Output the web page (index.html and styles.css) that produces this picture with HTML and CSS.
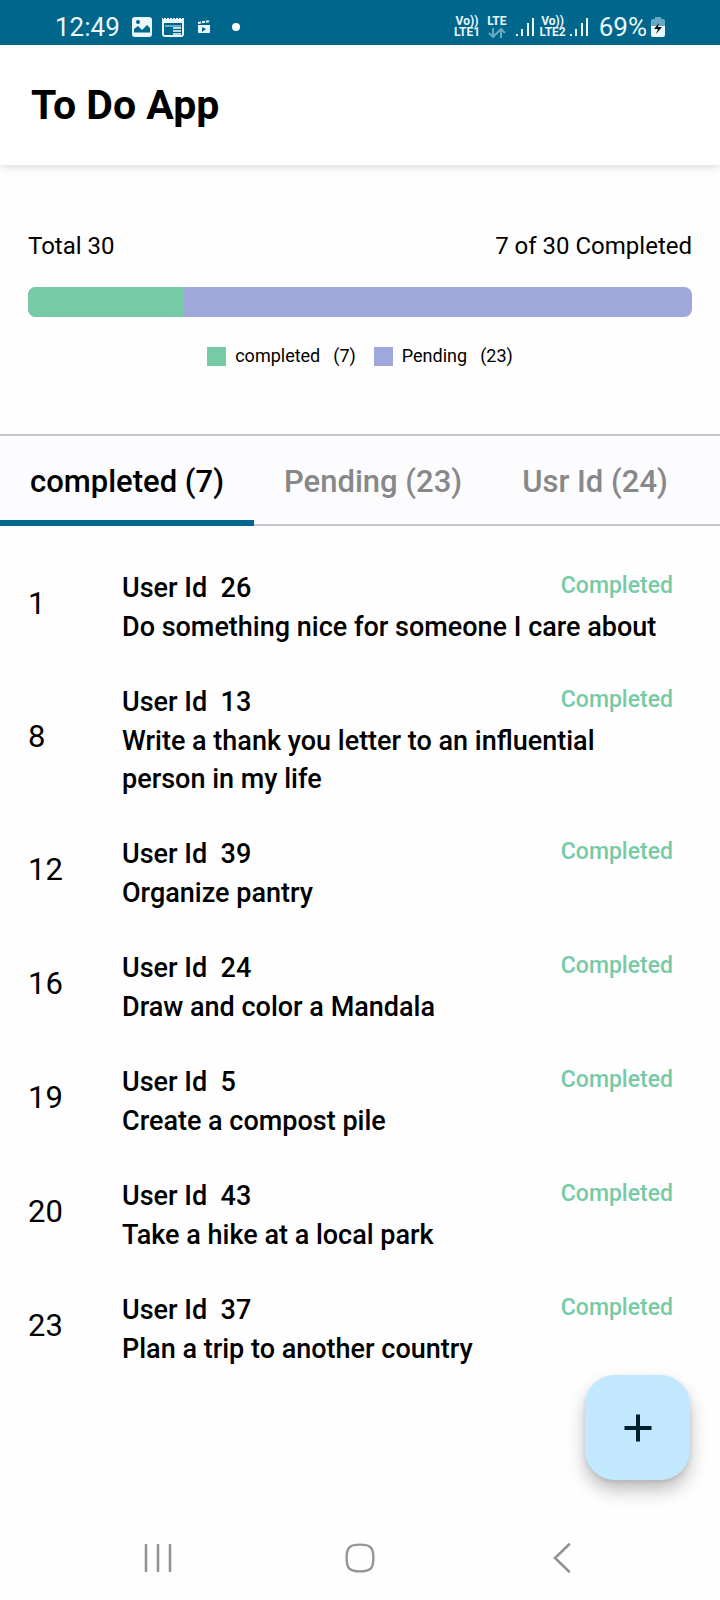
FILE: index.html
```html
<!DOCTYPE html>
<html lang="en">
<head>
<meta charset="utf-8">
<meta name="viewport" content="width=device-width, initial-scale=1">
<title>To Do App</title>
<link rel="stylesheet" href="styles.css">
</head>
<body>
<div class="status">
  <div class="status-group">
    <span class="clock">12:49</span>
    <svg width="22" height="22" viewBox="0 0 22 22"><rect x="1" y="1" width="20" height="20" rx="3" fill="#e9f6fc"/><path d="M3 17v-4l4-3 4 4 5-5 3 3v5z" fill="#00668b"/><circle cx="7" cy="6" r="2" fill="#00668b"/><path d="M2 18h18" stroke="#e9f6fc" stroke-width="3"/></svg>
    <svg width="22" height="22" viewBox="0 0 22 22"><path d="M0 2h22v16a3 3 0 0 1-3 3H3a3 3 0 0 1-3-3z" fill="#e9f6fc"/><path d="M1 2h20" stroke="#00668b" stroke-width="2" stroke-dasharray="1 2"/><path d="M2 7h18v12H2z" fill="#00668b"/><path d="M3 10h16" stroke="#6aa9c2" stroke-width="2"/><path d="M11 12h8M11 15h8M11 18h8" stroke="#b9dce9" stroke-width="2"/></svg>
    <svg class="ic-clip" width="14" height="14" viewBox="0 0 14 14"><path d="M1 5h12v7a1 1 0 0 1-1 1H2a1 1 0 0 1-1-1z" fill="#e9f6fc"/><path d="M1 3l12-2" stroke="#e9f6fc" stroke-width="2" stroke-dasharray="3 1"/><path d="M5 7l4 2-4 3z" fill="#00668b"/></svg>
    <span class="dot"></span>
  </div>
  <div class="status-group status-right">
    <span class="sim"><span>Vo))</span><span>LTE1</span></span>
    <span class="sim network"><span>LTE</span><svg width="18" height="10" viewBox="0 0 18 10" fill="none" stroke="#6aa9c2" stroke-width="2"><path d="M5 0v9M1 5l4 4 4-4M13 10V1M9 5l4-4 4 4"/></svg></span>
    <svg class="signal" width="19" height="20" viewBox="0 0 19 20" fill="#e9f6fc"><path d="M0 17h2v2H0zM5 12h2v7H5zM11 6h2v13h-2zM16 1h2v18h-2z"/></svg>
    <span class="sim"><span>Vo))</span><span>LTE2</span></span>
    <svg class="signal" width="19" height="20" viewBox="0 0 19 20" fill="#e9f6fc"><path d="M0 17h2v2H0zM5 12h2v7H5zM11 6h2v13h-2zM16 1h2v18h-2z"/></svg>
    <span class="percent">69%</span>
    <svg width="14" height="20" viewBox="0 0 14 20"><path d="M4 0h6v2h2a2 2 0 0 1 2 2v6H0V4a2 2 0 0 1 2-2h2z" fill="#6aa9c2"/><path d="M0 9h14v9a2 2 0 0 1-2 2H2a2 2 0 0 1-2-2z" fill="#e9f6fc"/><path d="M8 6l-5 6h4l-2 5 6-7H7z" fill="#111"/></svg>
  </div>
</div>
<header class="appbar"><h1>To Do App</h1></header>
<main>
  <section class="summary">
    <div class="totals"><span>Total 30</span><span>7 of 30 Completed</span></div>
    <div class="bar"><div class="bar-done" style="width:23.33%"></div></div>
    <div class="legend">
      <span class="key"><i class="swatch done"></i>completed <span class="count">(7)</span></span>
      <span class="key"><i class="swatch pending"></i>Pending <span class="count">(23)</span></span>
    </div>
  </section>
  <nav class="tabs">
    <button class="tab active">completed (7)</button>
    <button class="tab">Pending (23)</button>
    <button class="tab">Usr Id (24)</button>
  </nav>
  <ul class="todos">
    <li><span class="num">1</span><div class="body"><div class="top"><span class="user">User Id&nbsp; 26</span><span class="state">Completed</span></div><p>Do something nice for someone I care about</p></div></li>
    <li><span class="num">8</span><div class="body"><div class="top"><span class="user">User Id&nbsp; 13</span><span class="state">Completed</span></div><p>Write a thank you letter to an influential person in my life</p></div></li>
    <li><span class="num">12</span><div class="body"><div class="top"><span class="user">User Id&nbsp; 39</span><span class="state">Completed</span></div><p>Organize pantry</p></div></li>
    <li><span class="num">16</span><div class="body"><div class="top"><span class="user">User Id&nbsp; 24</span><span class="state">Completed</span></div><p>Draw and color a Mandala</p></div></li>
    <li><span class="num">19</span><div class="body"><div class="top"><span class="user">User Id&nbsp; 5</span><span class="state">Completed</span></div><p>Create a compost pile</p></div></li>
    <li><span class="num">20</span><div class="body"><div class="top"><span class="user">User Id&nbsp; 43</span><span class="state">Completed</span></div><p>Take a hike at a local park</p></div></li>
    <li><span class="num">23</span><div class="body"><div class="top"><span class="user">User Id&nbsp; 37</span><span class="state">Completed</span></div><p>Plan a trip to another country</p></div></li>
  </ul>
</main>
<button class="fab" aria-label="Add task"><svg width="28" height="28" viewBox="0 0 28 28"><path d="M14 0.5v27M0.5 14h27" stroke="#001e2c" stroke-width="4"/></svg></button>
<footer class="sysnav">
  <button aria-label="Recent apps"><svg width="30" height="30" viewBox="0 0 30 30" stroke="#949494" stroke-width="2.6" stroke-linecap="round"><path d="M3 2v26M15 2v26M27 2v26"/></svg></button>
  <button aria-label="Home"><svg width="30" height="30" viewBox="0 0 30 30" fill="none" stroke="#949494" stroke-width="2.4"><path d="M15 1.600C25.500 1.600 28.400 4.500 28.400 15S25.500 28.400 15 28.400 1.600 25.500 1.600 15 4.500 1.600 15 1.600z"/></svg></button>
  <button aria-label="Back"><svg width="30" height="30" viewBox="0 0 30 30" fill="none" stroke="#949494" stroke-width="2.6" stroke-linecap="round"><path d="M22 1.500L8 15l14 13.500"/></svg></button>
</footer>
</body>
</html>
```
FILE: styles.css
```css
* { box-sizing: border-box; }
body {
  margin: 0;
  min-height: 100vh;
  display: flex;
  flex-direction: column;
  background: #fefefe;
  color: #000;
  font-family: Roboto, "Liberation Sans", sans-serif;
}
button { border: 0; background: none; padding: 0; font: inherit; color: inherit; }
svg { display: block; flex: none; }
h1, p, ul { margin: 0; padding: 0; }

.status {
  height: 45px;
  padding: 8px 55px 0 55px;
  display: flex;
  justify-content: space-between;
  background: #00668b;
  color: #e9f6fc;
}
.status-group { display: flex; align-items: center; gap: 9px; }
.clock, .percent { font-size: 26px; line-height: 36px; }
.clock { margin-right: 2px; }
.ic-clip { margin: 0 12px 0 4px; }
.dot { width: 8px; height: 8px; border-radius: 50%; background: #fff; }
.status-right { gap: 4px; }
.sim { display: flex; flex-direction: column; align-items: center; font-size: 12px; line-height: 11px; font-weight: 700; }
.network { margin: 0 6px 0 3px; }
.sim svg { margin-top: 1px; }
.percent { margin-left: 6px; }

.appbar {
  padding: 36px 31px;
  background: #fff;
  box-shadow: 0 2px 8px rgba(0, 0, 0, .15);
}
.appbar h1 { font-size: 41px; line-height: 48px; font-weight: 700; }

.summary { padding: 64px 28px 65px; }
.totals { display: flex; justify-content: space-between; font-size: 24px; line-height: 34px; }
.bar { height: 30px; margin-top: 24px; border-radius: 8px; overflow: hidden; background: #9fa8da; }
.bar-done { height: 100%; background: #76caa6; }
.legend { display: flex; justify-content: center; gap: 18px; margin-top: 26px; font-size: 18px; line-height: 26px; }
.key { display: flex; align-items: center; }
.swatch { width: 19px; height: 19px; margin-right: 9px; }
.done { background: #76caa6; }
.pending { background: #9fa8da; }
.count { margin-left: 13px; }

.tabs { display: flex; height: 92px; background: #fcfcff; border-top: 2px solid #c9c5d0; box-shadow: inset 0 -2px #c9c5d0; }
.tab { padding: 6px 30px 0; font-size: 31px; font-weight: 500; color: #888; border-bottom: 6px solid transparent; }
.active { color: #000; border-bottom-color: #00668b; }

.todos { list-style: none; padding: 24px 47px 23px 28px; }
.todos li { display: flex; align-items: center; padding: 19px 0 18px; }
.num { width: 94px; font-size: 31px; line-height: 36px; padding-bottom: 7px; }
.body { flex: 1; font-size: 27px; line-height: 38px; font-weight: 500; }
.top { display: flex; justify-content: space-between; line-height: 39px; }
.state { font-size: 23px; line-height: 34px; color: #76caa6; }

.fab {
  position: fixed;
  right: 30px;
  bottom: 120px;
  width: 105px;
  height: 105px;
  border-radius: 30px;
  background: #c2e8ff;
  display: grid;
  place-items: center;
  box-shadow: 0 10px 18px rgba(0, 0, 0, .25), 0 2px 5px rgba(0, 0, 0, .1);
}
.sysnav { margin-top: auto; padding: 0 57px 27px; display: flex; justify-content: space-around; }
```
